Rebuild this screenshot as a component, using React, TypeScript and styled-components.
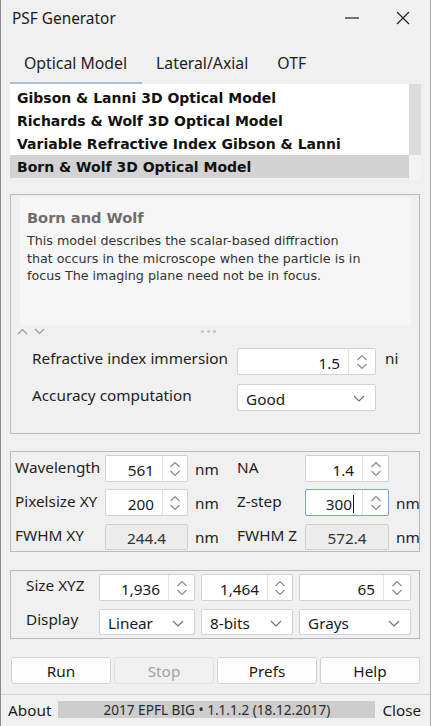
import React from "react";
import styled, { createGlobalStyle } from "styled-components";

const Global = createGlobalStyle`
  html, body { margin: 0; padding: 0; background: #f0f0f0; }
  * { box-sizing: border-box; }
`;

const UI = `"Noto Sans", "Open Sans", sans-serif`;
const VERD = `"DejaVu Sans", "Noto Sans", sans-serif`;

const Window = styled.div`
  width: 431px;
  height: 726px;
  background: #f0f0f0;
  border-left: 1px solid #8c8c8c;
  border-right: 1px solid #a8a8a8;
  display: flex;
  flex-direction: column;
  color: #1a1a1a;
  font-family: ${UI};
  font-size: 15px;
  overflow: hidden;
`;

const TitleBar = styled.div`
  height: 36px;
  display: flex;
  align-items: center;
  padding-left: 11px;
`;

const TitleText = styled.div`
  flex: 1;
  font-size: 15.4px;
  color: #1a1a1a;
`;

const WinButton = styled.div<{ $w: number }>`
  width: ${(p) => p.$w}px;
  height: 36px;
  display: flex;
  align-items: center;
  justify-content: center;
`;

const TabBar = styled.div`
  display: flex;
  padding-top: 8px;
  margin-left: 9px;
`;

const Tab = styled.div<{ $active?: boolean }>`
  height: 40px;
  padding: 0 15px 0 14px;
  display: flex;
  align-items: center;
  font-size: 15.8px;
  color: #222;
  border-bottom: 2px solid ${(p) => (p.$active ? "#a2bee0" : "transparent")};
`;

const List = styled.div`
  margin: 0 9px;
  height: 96px;
  display: flex;
`;

const ListBody = styled.div`
  flex: 1;
  background: #ffffff;
  padding-top: 2px;
  display: flex;
  flex-direction: column;
`;

const ListRow = styled.div<{ $selected?: boolean }>`
  height: 23px;
  padding-left: 7px;
  display: flex;
  align-items: center;
  font-family: ${VERD};
  font-weight: bold;
  font-size: 14px;
  color: #111;
  background: ${(p) => (p.$selected ? "#d3d3d3" : "transparent")};
`;

const ListFill = styled.div`
  flex: 1;
  background: #f0f0f0;
`;

const Strip = styled.div`
  width: 12px;
  display: flex;
  flex-direction: column;
`;

const StripTrack = styled.div`
  height: 71px;
  background: #dcdcdc;
`;

const StripCorner = styled.div`
  height: 25px;
  background: #f3f3f3;
`;

const Panel = styled.div<{ $mt: number }>`
  margin: ${(p) => p.$mt}px 10px 0 9px;
  border: 1px solid #b9b9b9;
`;

const Description = styled.div`
  margin: 3px 8px 0 9px;
  height: 127px;
  background: #f6f6f6;
  padding: 10px 8px 0 7px;
`;

const DescTitle = styled.div`
  font-family: ${VERD};
  font-weight: bold;
  font-size: 14.6px;
  color: #6e6e6e;
  line-height: 20px;
`;

const DescText = styled.div`
  margin-top: 4px;
  font-family: ${VERD};
  font-size: 12.7px;
  line-height: 17.5px;
  color: #333;
  white-space: nowrap;
`;

const SplitterRow = styled.div`
  height: 12px;
  display: grid;
  grid-template-columns: 1fr auto 1fr;
  align-items: center;
  padding-left: 6px;
  margin-right: 20px;
`;

const Arrows = styled.div`
  display: flex;
  gap: 6px;
`;

const Dots = styled.div`
  display: flex;
  gap: 3px;
`;

const Dot = styled.span`
  width: 3px;
  height: 3px;
  border-radius: 50%;
  background: #c4c4c4;
`;

const FormRows = styled.div`
  padding: 11px 0 22px 21px;
  display: flex;
  flex-direction: column;
  gap: 9px;
`;

const FormRow = styled.div`
  display: flex;
  align-items: center;
  height: 27px;
`;

const FormLabel = styled.div<{ $w: number; $dy?: number }>`
  width: ${(p) => p.$w}px;
  font-size: 15.3px;
  color: #1e1e1e;
  white-space: nowrap;
  position: relative;
  top: ${(p) => p.$dy ?? 0}px;
`;

const Unit = styled.div<{ $pl: number; $dy?: number }>`
  padding-left: ${(p) => p.$pl}px;
  font-size: 15.3px;
  color: #1e1e1e;
  position: relative;
  top: ${(p) => p.$dy ?? 0}px;
`;

const InputBox = styled.div<{ $w?: number; $focus?: boolean; $h?: number }>`
  width: ${(p) => (p.$w ? `${p.$w}px` : "auto")};
  height: ${(p) => p.$h ?? 27}px;
  background: #ffffff;
  border: 1px solid ${(p) => (p.$focus ? "#7aa4d6" : "#d2d2d2")};
  border-radius: 2px;
  display: flex;
  align-items: stretch;
`;

const Value = styled.div`
  flex: 1;
  display: flex;
  align-items: center;
  justify-content: flex-end;
  padding-right: 8px;
  font-size: 15.3px;
  color: #1a1a1a;
  padding-top: 2px;
`;

const Caret = styled.span`
  width: 1px;
  height: 18px;
  background: #111;
  margin-left: 1px;
`;

const SpinSection = styled.div<{ $w: number }>`
  width: ${(p) => p.$w}px;
  border-left: 1px solid #e2e2e2;
  display: flex;
  align-items: center;
  justify-content: center;
`;

const ReadOnly = styled.div<{ $w: number }>`
  width: ${(p) => p.$w}px;
  height: 26px;
  background: #ececec;
  border: 1px solid #cfcfcf;
  border-radius: 2px;
  display: flex;
  align-items: center;
  justify-content: center;
  font-size: 15.3px;
  color: #333;
  padding-top: 2px;
`;

const SelectBox = styled.div<{ $w?: number; $h?: number }>`
  width: ${(p) => (p.$w ? `${p.$w}px` : "auto")};
  height: ${(p) => p.$h ?? 27}px;
  background: #ffffff;
  border: 1px solid #d2d2d2;
  border-radius: 2px;
  display: flex;
  align-items: center;
  padding: 2px 10px 0 8px;
`;

const SelectText = styled.div`
  flex: 1;
  font-size: 15.3px;
  color: #1a1a1a;
`;

const OpticsGrid = styled.div`
  display: grid;
  grid-template-columns: 90px 83px 49px 68px 84px auto;
  grid-auto-rows: 27px;
  row-gap: 7px;
  align-items: center;
  padding: 3px 0 1px 4px;
`;

const SizeGrid = styled.div`
  display: grid;
  grid-template-columns: 67px 96px 92px 112px;
  grid-template-rows: 27px 26px;
  column-gap: 6px;
  row-gap: 8px;
  align-items: center;
  padding: 3px 0 3px 15px;
`;

const ButtonRow = styled.div`
  margin: 18px 10px 0 10px;
  display: flex;
  gap: 3px;
`;

const Button = styled.div<{ $disabled?: boolean }>`
  flex: 1;
  height: 27px;
  display: flex;
  align-items: center;
  justify-content: center;
  font-size: 15.3px;
  padding-top: 1px;
  border-radius: 3px;
  border: 1px solid ${(p) => (p.$disabled ? "#e0e0e0" : "#d3d3d3")};
  background: ${(p) => (p.$disabled ? "#f0f0f0" : "#fdfdfd")};
  color: ${(p) => (p.$disabled ? "#a3a3a3" : "#1a1a1a")};
`;

const Separator = styled.div`
  margin-top: 10px;
  height: 1px;
  background: #d6d6d6;
`;

const Footer = styled.div`
  height: 29px;
  display: flex;
  align-items: center;
  padding-left: 7px;
  gap: 7px;
  font-size: 15.3px;
`;

const StatusBar = styled.div`
  width: 317px;
  height: 17px;
  background: #cdcdcd;
  display: flex;
  align-items: center;
  justify-content: center;
  font-size: 13.6px;
  color: #2a2a2a;
`;

const SpinIcon = () => (
  <svg width="12" height="20" viewBox="0 0 12 20">
    <path d="M1.5 8 L6 3.5 L10.5 8" fill="none" stroke="#8a8a8a" strokeWidth="1.2" />
    <path d="M1.5 12 L6 16.5 L10.5 12" fill="none" stroke="#8a8a8a" strokeWidth="1.2" />
  </svg>
);

const ChevronDown = () => (
  <svg width="12" height="7" viewBox="0 0 12 7">
    <path d="M1 1 L6 6 L11 1" fill="none" stroke="#6e6e6e" strokeWidth="1.1" />
  </svg>
);

const Spinner: React.FC<{ value: string; w?: number; spin: number; focus?: boolean }> = ({ value, w, spin, focus }) => (
  <InputBox $w={w} $focus={focus}>
    <Value>
      {value}
      {focus && <Caret />}
    </Value>
    <SpinSection $w={spin}>
      <SpinIcon />
    </SpinSection>
  </InputBox>
);

const Select: React.FC<{ value: string; w?: number; h?: number }> = ({ value, w, h }) => (
  <SelectBox $w={w} $h={h}>
    <SelectText>{value}</SelectText>
    <ChevronDown />
  </SelectBox>
);

export default function App() {
  return (
    <Window>
      <Global />
      <TitleBar>
        <TitleText>PSF Generator</TitleText>
        <WinButton $w={56}>
          <svg width="14" height="2" viewBox="0 0 14 2">
            <path d="M0 1 H14" stroke="#222" strokeWidth="1.2" />
          </svg>
        </WinButton>
        <WinButton $w={50}>
          <svg width="14" height="14" viewBox="0 0 14 14" style={{ marginRight: 4 }}>
            <path d="M1 1 L13 13 M13 1 L1 13" stroke="#222" strokeWidth="1.2" />
          </svg>
        </WinButton>
      </TitleBar>

      <TabBar>
        <Tab $active>Optical Model</Tab>
        <Tab>Lateral/Axial</Tab>
        <Tab>OTF</Tab>
      </TabBar>

      <List>
        <ListBody>
          <ListRow>Gibson &amp; Lanni 3D Optical Model</ListRow>
          <ListRow>Richards &amp; Wolf 3D Optical Model</ListRow>
          <ListRow>Variable Refractive Index Gibson &amp; Lanni</ListRow>
          <ListRow $selected>Born &amp; Wolf 3D Optical Model</ListRow>
          <ListFill />
        </ListBody>
        <Strip>
          <StripTrack />
          <StripCorner />
        </Strip>
      </List>

      <Panel $mt={14}>
        <Description>
          <DescTitle>Born and Wolf</DescTitle>
          <DescText>
            This model describes the scalar-based diffraction
            <br />
            that occurs in the microscope when the particle is in
            <br />
            focus The imaging plane need not be in focus.
          </DescText>
        </Description>
        <SplitterRow>
          <Arrows>
            <svg width="11" height="7" viewBox="0 0 11 7">
              <path d="M1 6 L5.5 1.5 L10 6" fill="none" stroke="#9a9a9a" strokeWidth="1.2" />
            </svg>
            <svg width="11" height="7" viewBox="0 0 11 7">
              <path d="M1 1 L5.5 5.5 L10 1" fill="none" stroke="#9a9a9a" strokeWidth="1.2" />
            </svg>
          </Arrows>
          <Dots>
            <Dot />
            <Dot />
            <Dot />
          </Dots>
          <span />
        </SplitterRow>
        <FormRows>
          <FormRow>
            <FormLabel $w={205} $dy={-4}>Refractive index immersion</FormLabel>
            <Spinner value="1.5" w={139} spin={27} />
            <Unit $pl={9} $dy={-4}>ni</Unit>
          </FormRow>
          <FormRow>
            <FormLabel $w={205} $dy={-3}>Accuracy computation</FormLabel>
            <Select value="Good" w={139} />
          </FormRow>
        </FormRows>
      </Panel>

      <Panel $mt={17}>
        <OpticsGrid>
          <FormLabel $w={90} $dy={-2}>Wavelength</FormLabel>
          <Spinner value="561" spin={25} />
          <Unit $pl={7}>nm</Unit>
          <FormLabel $w={68} $dy={-2}>NA</FormLabel>
          <Spinner value="1.4" spin={26} />
          <span />

          <FormLabel $w={90} $dy={-2}>Pixelsize XY</FormLabel>
          <Spinner value="200" spin={25} />
          <Unit $pl={7}>nm</Unit>
          <FormLabel $w={68} $dy={-2}>Z-step</FormLabel>
          <Spinner value="300" spin={26} focus />
          <Unit $pl={7}>nm</Unit>

          <FormLabel $w={90} $dy={-2}>FWHM XY</FormLabel>
          <ReadOnly $w={83}>244.4</ReadOnly>
          <Unit $pl={7}>nm</Unit>
          <FormLabel $w={68} $dy={-2}>FWHM Z</FormLabel>
          <ReadOnly $w={84}>572.4</ReadOnly>
          <Unit $pl={7}>nm</Unit>
        </OpticsGrid>
      </Panel>

      <Panel $mt={18}>
        <SizeGrid>
          <FormLabel $w={67} $dy={-3}>Size XYZ</FormLabel>
          <Spinner value="1,936" spin={26} />
          <Spinner value="1,464" spin={25} />
          <Spinner value="65" spin={27} />
          <FormLabel $w={67} $dy={-3}>Display</FormLabel>
          <Select value="Linear" h={26} />
          <Select value="8-bits" h={26} />
          <Select value="Grays" h={26} />
        </SizeGrid>
      </Panel>

      <ButtonRow>
        <Button>Run</Button>
        <Button $disabled>Stop</Button>
        <Button>Prefs</Button>
        <Button>Help</Button>
      </ButtonRow>

      <Separator />

      <Footer>
        <span>About</span>
        <StatusBar>2017 EPFL BIG • 1.1.1.2 (18.12.2017)</StatusBar>
        <span>Close</span>
      </Footer>
    </Window>
  );
}
